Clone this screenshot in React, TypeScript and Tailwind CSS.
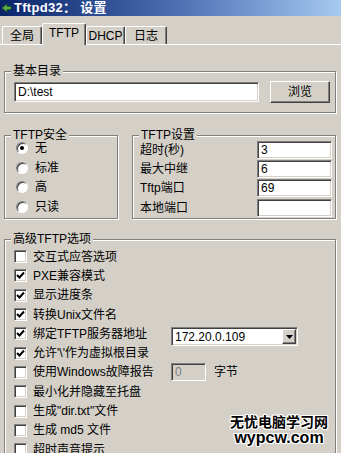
import type { ReactNode } from "react";

const FONT = '"Liberation Sans", "Noto Sans CJK SC", sans-serif';

const sunken =
  "border border-t-[#808080] border-l-[#808080] border-b-white border-r-white shadow-[inset_1px_1px_0_#404040,inset_-1px_-1px_0_#d4d0c8]";
const raised =
  "border border-t-white border-l-white border-b-[#404040] border-r-[#404040] shadow-[inset_-1px_-1px_0_#808080]";

function Group({ label, className, children }: { label: string; className?: string; children: ReactNode }) {
  return (
    <div
      className={`relative border border-[#808080] shadow-[1px_1px_0_#fff,inset_1px_1px_0_#fff] ${className ?? ""}`}
    >
      <span className="absolute -top-[8px] left-[6px] bg-[#d4d0c8] px-[2px] text-[12px] leading-[14px] text-black">
        {label}
      </span>
      {children}
    </div>
  );
}

function Radio({ checked, label }: { checked?: boolean; label: string }) {
  return (
    <div className="flex h-[19.7px] items-center gap-[7px]">
      <div className="flex h-[12px] w-[12px] items-center justify-center rounded-full border border-t-[#808080] border-l-[#808080] border-b-white border-r-white bg-white shadow-[inset_1px_1px_0_#404040]">
        {checked && <div className="h-[4px] w-[4px] rounded-full bg-black" />}
      </div>
      <span>{label}</span>
    </div>
  );
}

function Check({ checked }: { checked?: boolean }) {
  return (
    <div className={`flex h-[13px] w-[13px] shrink-0 items-center justify-center bg-white ${sunken}`}>
      {checked && (
        <svg width="9" height="9" viewBox="0 0 9 9">
          <path d="M1 4 L3.5 6.5 L8 1.5" stroke="#000" strokeWidth="2" fill="none" />
        </svg>
      )}
    </div>
  );
}

function Field({ value }: { value: string }) {
  return (
    <div className={`flex h-[18px] w-[75px] items-center bg-white px-[3px] ${sunken}`}>{value}</div>
  );
}

const options: { label: string; checked: boolean; extra?: "combo" | "size" }[] = [
  { label: "交互式应答选项", checked: false },
  { label: "PXE兼容模式", checked: true },
  { label: "显示进度条", checked: true },
  { label: "转换Unix文件名", checked: true },
  { label: "绑定TFTP服务器地址", checked: true, extra: "combo" },
  { label: "允许'\\'作为虚拟根目录", checked: true },
  { label: "使用Windows故障报告", checked: false, extra: "size" },
  { label: "最小化并隐藏至托盘", checked: false },
  { label: "生成\"dir.txt\"文件", checked: false },
  { label: "生成 md5 文件", checked: false },
  { label: "超时声音提示", checked: false },
];

export default function App() {
  return (
    <div
      className="relative h-[453px] w-[341px] overflow-hidden bg-[#d4d0c8] text-[12px] text-black"
      style={{ fontFamily: FONT }}
    >
      {/* Title bar */}
      <div className="flex h-[16px] items-center gap-[2px] bg-gradient-to-r from-[#0a246a] via-[#4a6cb0] to-[#a6caf0] px-[1px] text-[13px] font-bold text-white">
        <svg width="11" height="11" viewBox="0 0 11 11">
          <path d="M1 5 L6 1 L6 3.5 L10 3.5 L10 6.5 L6 6.5 L6 9 Z" fill="#5fb04a" stroke="#1d5a1a" strokeWidth="0.8" />
        </svg>
        <span className="tracking-[0.3px]">Tftpd32：&nbsp;设置</span>
      </div>

      {/* Tabs */}
      <div className="mt-[7px] flex h-[21px] items-end pl-[2px]">
        {[
          { t: "全局", w: "w-[40px]" },
          { t: "TFTP", w: "w-[44px]", active: true },
          { t: "DHCP", w: "w-[39px]" },
          { t: "日志", w: "w-[42px]" },
        ].map((tab) => (
          <div
            key={tab.t}
            className={`flex items-center justify-center rounded-t-[2px] border-l border-t border-r border-l-white border-t-white border-r-[#404040] shadow-[inset_-1px_0_0_#808080] ${tab.w} ${
              tab.active ? "relative z-10 h-[22px] translate-y-px bg-[#d4d0c8] pb-[3px]" : "h-[18px]"
            }`}
          >
            {tab.t}
          </div>
        ))}
      </div>
      <div className="h-px bg-white" />

      {/* Pane */}
      <div className="flex flex-col pl-[4px] pr-[5px]">
        <Group label="基本目录" className="mt-[26px] flex h-[42px] items-center justify-between pl-[9px] pr-[5px]">
          <div className={`flex h-[20px] w-[245px] items-center bg-white px-[3px] ${sunken}`}>D:\test</div>
          <button className={`h-[22px] w-[60px] bg-[#d4d0c8] ${raised}`}>浏览</button>
        </Group>

        <div className="mt-[22px] flex h-[84px] gap-[14px]">
          <Group label="TFTP安全" className="w-[114px] pl-[11px] pt-[2px]">
            <Radio checked label="无" />
            <Radio label="标准" />
            <Radio label="高" />
            <Radio label="只读" />
          </Group>
          <Group label="TFTP设置" className="flex-1 pl-[7px] pr-[3px] pt-[4px]">
            {[
              ["超时(秒)", "3"],
              ["最大中继", "6"],
              ["Tftp端口", "69"],
              ["本地端口", ""],
            ].map(([l, v]) => (
              <div key={l} className="flex h-[19.3px] items-center justify-between">
                <span>{l}</span>
                <Field value={v} />
              </div>
            ))}
          </Group>
        </div>

        <Group label="高级TFTP选项" className="mt-[20px] h-[260px] pl-[9px] pt-[7px]">
          {options.map((o) => (
            <div key={o.label} className="flex h-[19.3px] items-center">
              <div className="flex w-[157px] items-center gap-[6px]">
                <Check checked={o.checked} />
                <span className="whitespace-nowrap">{o.label}</span>
              </div>
              {o.extra === "combo" && (
                <div className={`flex h-[19px] w-[127px] translate-y-[3px] items-center justify-between bg-white pl-[3px] pr-[1px] ${sunken}`}>
                  <span>172.20.0.109</span>
                  <div className={`flex h-[15px] w-[14px] items-center justify-center bg-[#d4d0c8] ${raised}`}>
                    <svg width="7" height="4" viewBox="0 0 7 4">
                      <path d="M0 0 H7 L3.5 4 Z" fill="#000" />
                    </svg>
                  </div>
                </div>
              )}
              {o.extra === "size" && (
                <div className="flex items-center gap-[8px]">
                  <div className={`flex h-[18px] w-[35px] items-center bg-[#d4d0c8] px-[3px] text-[#808080] ${sunken}`}>0</div>
                  <span>字节</span>
                </div>
              )}
            </div>
          ))}
        </Group>
      </div>

      {/* Watermark */}
      <div
        className="absolute bottom-[7px] right-[13px] flex flex-col items-center font-bold leading-none text-black"
        style={{ textShadow: "1px 0 #fff, -1px 0 #fff, 0 1px #fff, 0 -1px #fff, 1px 1px #fff, -1px -1px #fff, 1px -1px #fff, -1px 1px #fff" }}
      >
        <span className="text-[14px]">无忧电脑学习网</span>
        <span className="mt-[1px] text-[16px]" style={{ fontFamily: '"Liberation Sans", sans-serif' }}>
          wypcw.com
        </span>
      </div>
    </div>
  );
}
